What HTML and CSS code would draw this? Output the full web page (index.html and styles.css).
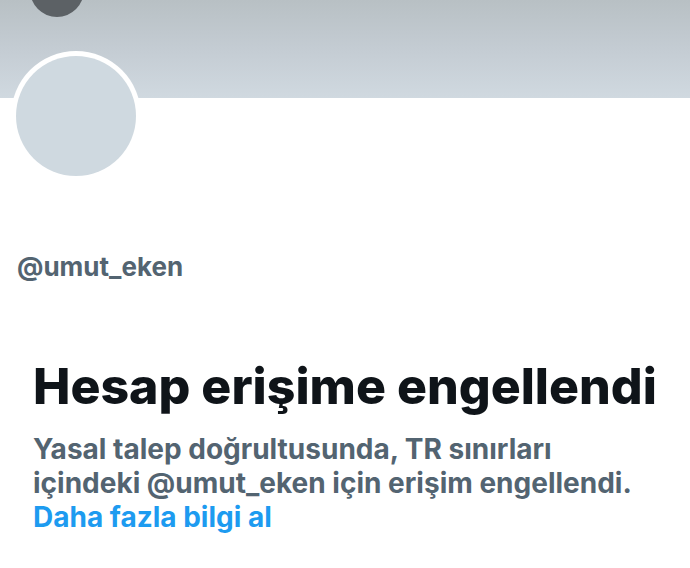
FILE: index.html
```html
<!DOCTYPE html>
<html lang="tr">
<head>
<meta charset="utf-8">
<link rel="stylesheet" href="styles.css">
</head>
<body>
<div class="page">
  <div class="banner">
    <div class="back"></div>
  </div>
  <div class="profile">
    <div class="avatar"><div class="avatar-inner"></div></div>
    <div class="handle">@umut_eken</div>
  </div>
  <div class="notice">
    <h1 class="title">Hesap erişime engellendi</h1>
    <p class="desc">Yasal talep doğrultusunda, TR sınırları<br>içindeki @umut_eken için erişim engellendi.<br><a class="link" href="#">Daha fazla bilgi al</a></p>
  </div>
</div>
</body>
</html>
```
FILE: styles.css
```css
* { box-sizing: border-box; }
html, body { margin: 0; padding: 0; background: #fff; }
body { font-family: Inter, "Noto Sans", sans-serif; width: 690px; height: 568px; overflow: hidden; }
.page { position: relative; }
.banner {
  height: 98px;
  background: linear-gradient(180deg, #b8c0c4 0%, #c4ccd3 50%, #d0d9e0 100%);
  position: relative;
}
.back {
  position: absolute;
  left: 30px;
  top: -37px;
  width: 54px;
  height: 54px;
  border-radius: 50%;
  background: #5c6165;
}
.profile { padding: 0 0 0 11px; }
.avatar {
  margin-top: -47px;
  width: 130px;
  height: 130px;
  border-radius: 50%;
  background: #fff;
  padding: 5px;
  position: relative;
}
.avatar-inner {
  width: 100%;
  height: 100%;
  border-radius: 50%;
  background: #cfd9e0;
}
.handle {
  margin-top: 70px;
  margin-left: 6px;
  font-size: 26px;
  font-weight: 700;
  color: #536471;
  line-height: 32px;
}
.notice { padding: 0 0 0 33px; margin-top: 73px; }
.title {
  margin: 0;
  font-size: 50px;
  font-weight: 800;
  color: #0f1419;
  line-height: 60px;
  letter-spacing: 0;
}
.desc {
  margin: 16px 0 0;
  font-size: 28px;
  font-weight: 700;
  color: #536471;
  line-height: 34px;
  white-space: nowrap;
}
.link { color: #1d9bf0; text-decoration: none; }
```
